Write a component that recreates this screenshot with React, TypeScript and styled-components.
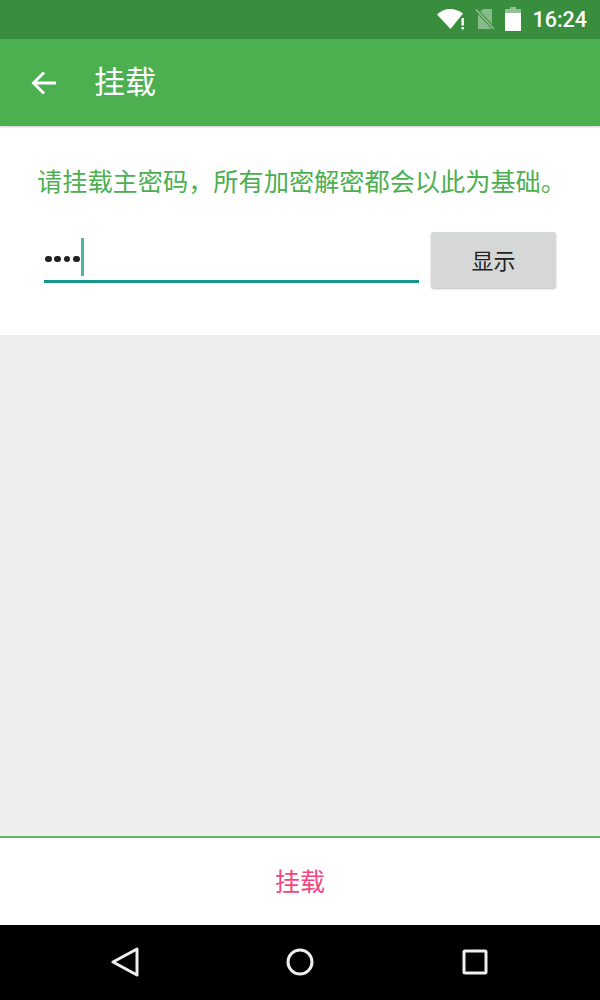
import React from "react"
import styled, { createGlobalStyle } from "styled-components"

const GlobalStyle = createGlobalStyle`
    html, body {
        margin: 0;
        padding: 0;
        background: #000;
    }
    body {
        font-family: "Roboto", "Noto Sans CJK SC", sans-serif;
    }
`
const Screen = styled.div`
    width: 600px;
    height: 1000px;
    display: flex;
    flex-direction: column;
    overflow: hidden;
    background: #eeeeee;
`
const StatusBar = styled.div`
    height: 39px;
    flex: none;
    background: #388e3c;
    display: flex;
    align-items: center;
    justify-content: flex-end;
    padding-right: 13px;
    color: #fff;
    box-sizing: border-box;
`
const StatusIcons = styled.div`
    display: flex;
    align-items: center;
    gap: 10px;
    margin-right: 11px;
    margin-top: -1px;
`
const Clock = styled.span`
    font-family: "Roboto", sans-serif;
    font-size: 21.5px;
    font-weight: 500;
    line-height: 39px;
`
const Toolbar = styled.div`
    height: 87px;
    flex: none;
    background: #4caf50;
    display: flex;
    align-items: center;
    padding-left: 31px;
    box-shadow: 0 1px 2px rgba(0, 0, 0, 0.2);
    position: relative;
`
const Title = styled.div`
    color: #fff;
    font-size: 31px;
    margin-left: 37px;
    line-height: 40px;
`
const Card = styled.div`
    height: 209px;
    flex: none;
    background: #fff;
    box-sizing: border-box;
    padding: 40px 37px 0;
`
const Hint = styled.div`
    color: #4caf50;
    font-size: 25.2px;
    line-height: 34px;
    white-space: nowrap;
`
const PasswordRow = styled.div`
    display: flex;
    align-items: flex-start;
    margin-top: 32px;
    padding-left: 7px;
`
const PasswordField = styled.div`
    width: 375px;
    height: 47px;
    box-sizing: border-box;
    margin-top: 4px;
    border-bottom: 3px solid #159688;
    display: flex;
    align-items: center;
`
const Dots = styled.div`
    display: flex;
    gap: 2.8px;
    margin-left: 1px;
    margin-top: 2px;
`
const Dot = styled.span`
    width: 6.6px;
    height: 6.6px;
    border-radius: 50%;
    background: #222;
`
const Cursor = styled.span`
    width: 3px;
    height: 38px;
    margin-left: 1px;
    margin-top: -2px;
    background: #4fb3a8;
`
const ShowButton = styled.div`
    width: 125px;
    height: 56px;
    margin-left: 12px;
    padding-bottom: 3px;
    box-sizing: border-box;
    border-radius: 3px;
    background: #d6d7d7;
    box-shadow: 0 1px 2px rgba(0, 0, 0, 0.25);
    color: #222;
    font-size: 22px;
    display: flex;
    align-items: center;
    justify-content: center;
`
const Spacer = styled.div`
    flex: 1;
    background: #eeeeee;
`
const BottomBar = styled.div`
    height: 89px;
    flex: none;
    box-sizing: border-box;
    background: #fff;
    border-top: 2px solid #66b56a;
    padding-bottom: 4px;
    display: flex;
    align-items: center;
    justify-content: center;
    color: #f2447f;
    font-size: 25px;
`
const NavBar = styled.div`
    height: 75px;
    flex: none;
    background: #000;
    display: flex;
    align-items: center;
    padding: 0 0 1px 111px;
    box-sizing: border-box;
    gap: 147px;
`

const WifiIcon = () => (
    <svg width="28" height="22" viewBox="0 0 28 22">
        <path d="M0 6.5C3.5 3 8 1 13 1s8.5 1.5 13 4.5L13.5 21z" fill="#fff" />
        <rect x="24.5" y="10" width="2.4" height="7.5" fill="#fff" />
        <rect x="24.5" y="19" width="2.4" height="2.4" fill="#fff" />
    </svg>
)

const NoSimIcon = () => (
    <svg width="20" height="22" viewBox="0 0 20 22">
        <path d="M3 21V6l5-5h9v20z" fill="#fff" fillOpacity="0.4" />
        <path d="M1 1.5L19 21" stroke="#388e3c" strokeWidth="3.5" />
        <path d="M1 1.5L19 21" stroke="#fff" strokeOpacity="0.45" strokeWidth="1.6" />
    </svg>
)

const BatteryIcon = () => (
    <svg width="16" height="24" viewBox="0 0 16 24">
        <path d="M5 0h6v2h5v22H0V2h5z" fill="#fff" fillOpacity="0.45" />
        <path d="M0 6h16v18H0z" fill="#fff" />
    </svg>
)

const BackArrow = () => (
    <svg width="26" height="26" viewBox="0 0 26 26">
        <path d="M25 13H3M13 2.5L2.5 13 13 23.5" fill="none" stroke="#fff" strokeWidth="3" />
    </svg>
)

const NavBack = () => (
    <svg width="28" height="30" viewBox="0 0 28 30">
        <path d="M26 2v26L2 15z" fill="none" stroke="#eee" strokeWidth="3" strokeLinejoin="round" />
    </svg>
)

const NavHome = () => (
    <svg width="28" height="28" viewBox="0 0 28 28">
        <circle cx="14" cy="14" r="12" fill="none" stroke="#eee" strokeWidth="3" />
    </svg>
)

const NavRecent = () => (
    <svg width="28" height="26" viewBox="-1 0 28 26">
        <rect x="2" y="2" width="22" height="22" rx="1" fill="none" stroke="#eee" strokeWidth="3" />
    </svg>
)

const App = () => {
    return <Screen>
        <GlobalStyle />
        <StatusBar>
            <StatusIcons>
                <WifiIcon />
                <NoSimIcon />
                <BatteryIcon />
            </StatusIcons>
            <Clock>16:24</Clock>
        </StatusBar>
        <Toolbar>
            <BackArrow />
            <Title>挂载</Title>
        </Toolbar>
        <Card>
            <Hint>请挂载主密码，所有加密解密都会以此为基础。</Hint>
            <PasswordRow>
                <PasswordField>
                    <Dots>
                        <Dot /><Dot /><Dot /><Dot />
                    </Dots>
                    <Cursor />
                </PasswordField>
                <ShowButton>显示</ShowButton>
            </PasswordRow>
        </Card>
        <Spacer />
        <BottomBar>挂载</BottomBar>
        <NavBar>
            <NavBack />
            <NavHome />
            <NavRecent />
        </NavBar>
    </Screen>
}

export default App
